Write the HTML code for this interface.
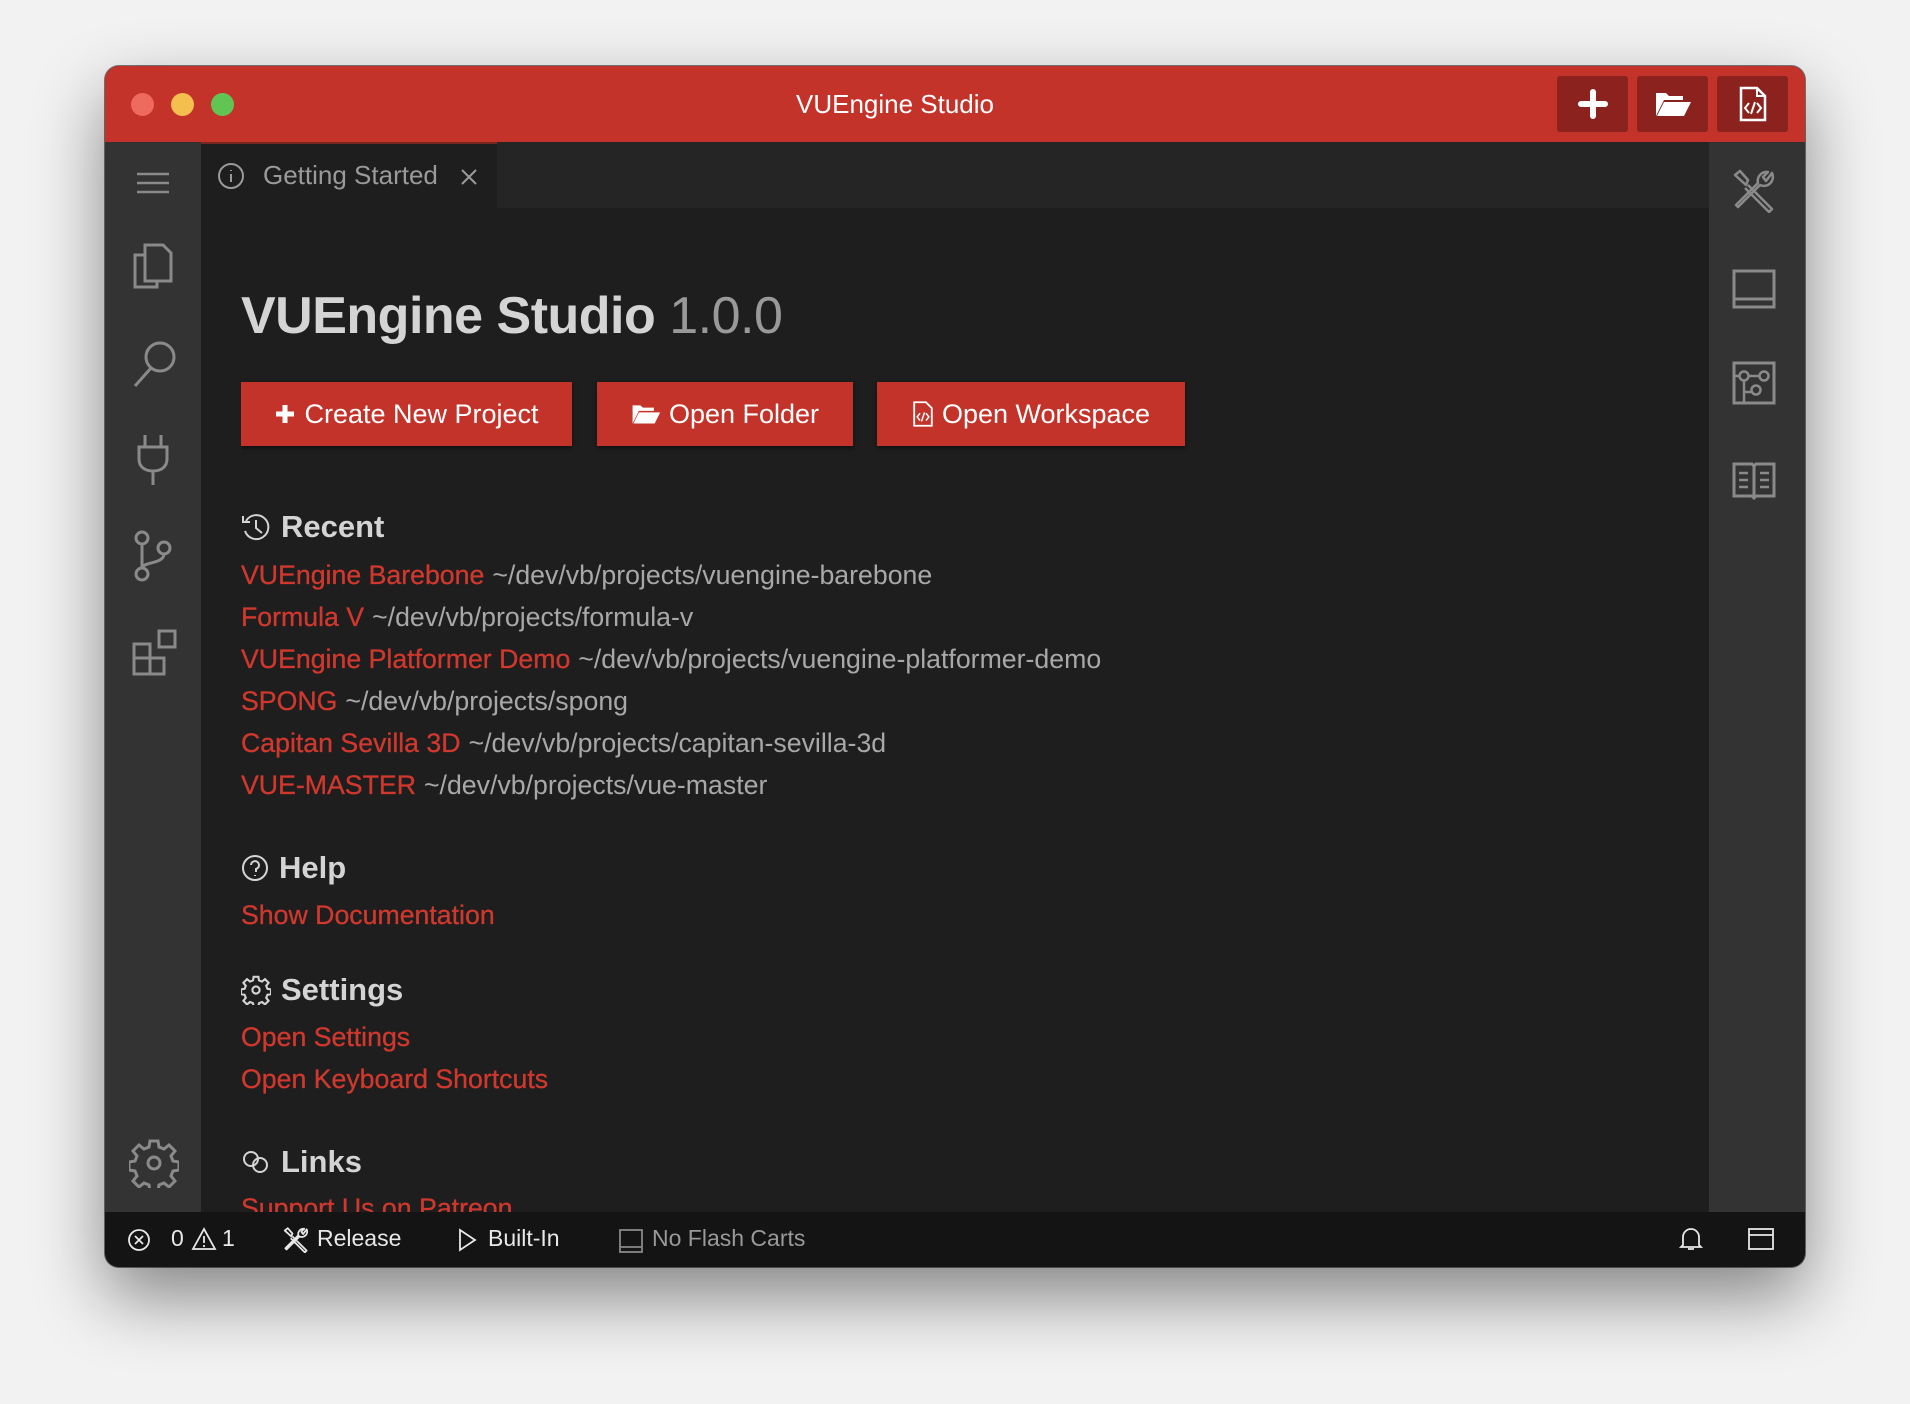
<!DOCTYPE html>
<html><head><meta charset="utf-8"><style>
*{margin:0;padding:0;box-sizing:border-box}
body{width:1910px;height:1404px;background:#f2f2f2;font-family:"Liberation Sans",Arial,sans-serif;position:relative;overflow:hidden}
.win{position:absolute;left:105px;top:66px;width:1700px;height:1201px;border-radius:14px;overflow:hidden;background:#1e1e1e;box-shadow:0 30px 70px rgba(0,0,0,.45),0 0 0 1px rgba(0,0,0,.5)}
.title{position:absolute;left:0;top:0;width:1700px;height:76px;background:#c3332a}
.dot{position:absolute;top:27px;width:23px;height:23px;border-radius:50%}
.ttext{position:absolute;left:640px;top:23px;width:300px;text-align:center;color:#fff;font-size:26px}
.tb{position:absolute;top:10px;width:71px;height:56px;background:#8b221d;border-radius:3px;display:flex;align-items:center;justify-content:center}
.left{position:absolute;left:0;top:76px;width:96px;height:1070px;background:#333}
.right{position:absolute;right:0;top:76px;width:96px;height:1070px;background:#333}
.tabbar{position:absolute;left:96px;top:76px;width:1508px;height:66px;background:#252526}
.tab{position:absolute;left:0;top:0;width:296px;height:66px;background:#1e1e1e;border-top:2px solid #7a2520;color:#9a9a9a;font-size:26px}
.status{position:absolute;left:0;top:1146px;width:1700px;height:55px;background:#141414;color:#e8e8e8;font-size:23px}
.status span{position:absolute;top:13px}
.content{position:absolute;left:136px;top:142px;width:1460px;height:1004px;overflow:hidden}
h1{position:absolute;left:0;top:78px;font-size:52px;color:#d4d4d4;font-weight:bold;white-space:nowrap;letter-spacing:-0.5px}
h1 span{font-weight:normal;color:#999}
.btn{position:absolute;top:174px;height:64px;background:#c3332a;color:#fff;font-size:27px;display:flex;align-items:center;justify-content:center;gap:8px;box-shadow:0 2px 4px rgba(0,0,0,.5)}
h2{position:absolute;left:0;font-size:31px;color:#d4d4d4;font-weight:bold;display:flex;align-items:center;gap:10px}
.row{position:absolute;left:0;font-size:26.7px;white-space:nowrap}
.row a{color:#d0382e;text-decoration:none;-webkit-text-stroke:0.3px #d0382e}
.row i{font-style:normal;color:#a8a8a8;margin-left:8px}
.ic{position:absolute}
</style></head><body>
<div class="win">
 <div class="title">
  <div class="dot" style="left:26px;background:#ee6a5e"></div>
  <div class="dot" style="left:66px;background:#f5bf4f"></div>
  <div class="dot" style="left:106px;background:#61c554"></div>
  <div class="ttext">VUEngine Studio</div>
  <div class="tb" style="left:1452px"><svg width="30" height="30" viewBox="0 0 30 30"><path d="M15 3v24M3 15h24" stroke="#fff" stroke-width="6" stroke-linecap="round"/></svg></div>
  <div class="tb" style="left:1532px"><svg width="38" height="30" viewBox="0 0 38 30"><path d="M2 4h10l3 3h14v4H10L2 27z" fill="#fff"/><path d="M10 13h27l-7 14H3z" fill="#fff"/></svg></div>
  <div class="tb" style="left:1612px"><svg width="30" height="36" viewBox="0 0 30 36"><path d="M3 2h16l8 8v24H3z" fill="none" stroke="#fff" stroke-width="2.5"/><path d="M19 2v8h8" fill="none" stroke="#fff" stroke-width="2"/><path d="M11 17l-4 5 4 5M19 17l4 5-4 5M17 16l-4 12" fill="none" stroke="#fff" stroke-width="2"/></svg></div>
 </div>
 <div class="left">
  <svg class="ic" style="left:30px;top:29px" width="36" height="24" viewBox="0 0 36 24"><path d="M2 3h32M2 12h32M2 21h32" stroke="#8a8a8a" stroke-width="2.5"/></svg>
  <svg class="ic" style="left:26px;top:99px" width="44" height="50" viewBox="0 0 44 50"><path d="M14 14H4v32h22v-6" fill="none" stroke="#8a8a8a" stroke-width="3"/><path d="M14 4h18l8 8v28H14z" fill="none" stroke="#8a8a8a" stroke-width="3"/></svg>
  <svg class="ic" style="left:26px;top:196px" width="48" height="50" viewBox="0 0 48 50"><circle cx="29" cy="19" r="14" fill="none" stroke="#8a8a8a" stroke-width="3"/><path d="M20 30L4 48" stroke="#8a8a8a" stroke-width="3"/></svg>
  <svg class="ic" style="left:30px;top:291px" width="36" height="54" viewBox="0 0 36 54"><path d="M10 2v12M26 2v12M4 14h28v12c0 8-6 12-14 12S4 34 4 26z M18 38v14" fill="none" stroke="#8a8a8a" stroke-width="3"/></svg>
  <svg class="ic" style="left:28px;top:388px" width="40" height="52" viewBox="0 0 40 52"><circle cx="9" cy="8" r="6" fill="none" stroke="#8a8a8a" stroke-width="3"/><circle cx="9" cy="44" r="6" fill="none" stroke="#8a8a8a" stroke-width="3"/><circle cx="31" cy="18" r="6" fill="none" stroke="#8a8a8a" stroke-width="3"/><path d="M9 14v24M31 24c0 10-22 8-22 14" fill="none" stroke="#8a8a8a" stroke-width="3"/></svg>
  <svg class="ic" style="left:26px;top:486px" width="48" height="48" viewBox="0 0 48 48"><path d="M3 16h16v30H3zM3 30h30v16H19" fill="none" stroke="#8a8a8a" stroke-width="3"/><rect x="28" y="3" width="16" height="16" fill="none" stroke="#8a8a8a" stroke-width="3"/></svg>
  <svg class="ic" style="left:24px;top:996px" width="50" height="50" viewBox="0 0 50 50"><path d="M21 3h8l1 6 5 2 5-4 6 6-4 5 2 5 6 1v8l-6 1-2 5 4 5-6 6-5-4-5 2-1 6h-8l-1-6-5-2-5 4-6-6 4-5-2-5-6-1v-8l6-1 2-5-4-5 6-6 5 4 5-2z" fill="none" stroke="#8a8a8a" stroke-width="3"/><circle cx="25" cy="25" r="6" fill="none" stroke="#8a8a8a" stroke-width="3"/></svg>
 </div>
 <div class="right">
  <svg class="ic" style="left:23px;top:27px" width="44" height="44" viewBox="0 0 44 44"><path d="M3 6l5-4 8 9-2 5zM16 16l24 24-3 3L13 19M40 4a9 9 0 0 1-12 12L6 38l-2-2 22-22a9 9 0 0 1 10-11l-5 5 3 4z" fill="none" stroke="#8a8a8a" stroke-width="2.5" stroke-linejoin="round"/></svg>
  <svg class="ic" style="left:23px;top:127px" width="44" height="40" viewBox="0 0 44 40"><rect x="2" y="2" width="40" height="36" fill="none" stroke="#8a8a8a" stroke-width="3"/><path d="M2 30h40" stroke="#8a8a8a" stroke-width="3"/></svg>
  <svg class="ic" style="left:23px;top:219px" width="44" height="44" viewBox="0 0 44 44"><rect x="2" y="2" width="40" height="40" fill="none" stroke="#8a8a8a" stroke-width="3"/><circle cx="12" cy="15" r="4.5" fill="none" stroke="#8a8a8a" stroke-width="2.5"/><circle cx="32" cy="15" r="4.5" fill="none" stroke="#8a8a8a" stroke-width="2.5"/><circle cx="24" cy="29" r="4.5" fill="none" stroke="#8a8a8a" stroke-width="2.5"/><path d="M17 15h10M12 20v9M12 29v13M12 31h7M2 15h5" fill="none" stroke="#8a8a8a" stroke-width="2.5"/></svg>
  <svg class="ic" style="left:23px;top:320px" width="44" height="38" viewBox="0 0 44 38"><path d="M2 2h18l2 2 2-2h18v32H24l-2 2-2-2H2z M22 4v30" fill="none" stroke="#8a8a8a" stroke-width="3"/><path d="M7 11h9M7 18h9M7 25h9M28 11h9M28 18h9M28 25h9" stroke="#8a8a8a" stroke-width="2.5"/></svg>
 </div>
 <div class="tabbar">
  <div class="tab">
   <svg class="ic" style="left:16px;top:18px" width="28" height="28" viewBox="0 0 28 28"><circle cx="14" cy="14" r="12" fill="none" stroke="#9a9a9a" stroke-width="2"/><path d="M14 12v8M14 8v1" stroke="#9a9a9a" stroke-width="2"/></svg>
   <span style="position:absolute;left:62px;top:16px">Getting Started</span>
   <svg class="ic" style="left:259px;top:24px" width="18" height="18" viewBox="0 0 18 18"><path d="M2 2l14 14M16 2L2 16" stroke="#9a9a9a" stroke-width="2"/></svg>
  </div>
 </div>
 <div class="content">
  <h1>VUEngine Studio <span>1.0.0</span></h1>
  <div class="btn" style="left:0;width:331px"><svg width="22" height="22" viewBox="0 0 22 22"><path d="M11 2v18M2 11h18" stroke="#fff" stroke-width="5"/></svg>Create New Project</div>
  <div class="btn" style="left:356px;width:256px"><svg width="30" height="24" viewBox="0 0 38 30"><path d="M2 4h10l3 3h14v4H10L2 27z" fill="#fff"/><path d="M10 13h27l-7 14H3z" fill="#fff"/></svg>Open Folder</div>
  <div class="btn" style="left:636px;width:308px"><svg width="22" height="28" viewBox="0 0 30 36"><path d="M3 2h16l8 8v24H3z" fill="none" stroke="#fff" stroke-width="2.5"/><path d="M11 17l-4 5 4 5M19 17l4 5-4 5M17 16l-4 12" fill="none" stroke="#fff" stroke-width="2"/></svg>Open Workspace</div>
  <h2 style="top:301px"><svg width="30" height="30" viewBox="0 0 30 30"><path d="M5 9A12 12 0 1 1 4 19M2 4v6h7M15 8v8l6 5" fill="none" stroke="#d4d4d4" stroke-width="2"/></svg>Recent</h2>
  <div class="row" style="top:352px"><a>VUEngine Barebone</a><i>~/dev/vb/projects/vuengine-barebone</i></div>
  <div class="row" style="top:394px"><a>Formula V</a><i>~/dev/vb/projects/formula-v</i></div>
  <div class="row" style="top:436px"><a>VUEngine Platformer Demo</a><i>~/dev/vb/projects/vuengine-platformer-demo</i></div>
  <div class="row" style="top:478px"><a>SPONG</a><i>~/dev/vb/projects/spong</i></div>
  <div class="row" style="top:520px"><a>Capitan Sevilla 3D</a><i>~/dev/vb/projects/capitan-sevilla-3d</i></div>
  <div class="row" style="top:562px"><a>VUE-MASTER</a><i>~/dev/vb/projects/vue-master</i></div>
  <h2 style="top:642px"><svg width="28" height="28" viewBox="0 0 28 28"><circle cx="14" cy="14" r="12" fill="none" stroke="#d4d4d4" stroke-width="2"/><path d="M10 11a4 4 0 1 1 5 4v3M14 21v1" fill="none" stroke="#d4d4d4" stroke-width="2"/></svg>Help</h2>
  <div class="row" style="top:692px"><a>Show Documentation</a></div>
  <h2 style="top:764px"><svg width="30" height="30" viewBox="0 0 50 50"><path d="M21 3h8l1 6 5 2 5-4 6 6-4 5 2 5 6 1v8l-6 1-2 5 4 5-6 6-5-4-5 2-1 6h-8l-1-6-5-2-5 4-6-6 4-5-2-5-6-1v-8l6-1 2-5-4-5 6-6 5 4 5-2z" fill="none" stroke="#d4d4d4" stroke-width="3.5"/><circle cx="25" cy="25" r="6" fill="none" stroke="#d4d4d4" stroke-width="3.5"/></svg>Settings</h2>
  <div class="row" style="top:814px"><a>Open Settings</a></div>
  <div class="row" style="top:856px"><a>Open Keyboard Shortcuts</a></div>
  <h2 style="top:936px"><svg width="30" height="24" viewBox="0 0 30 24"><circle cx="10" cy="9" r="7" fill="none" stroke="#d4d4d4" stroke-width="2"/><circle cx="19" cy="15" r="7" fill="none" stroke="#d4d4d4" stroke-width="2"/></svg>Links</h2>
  <div class="row" style="top:985px"><a>Support Us on Patreon</a></div>
 </div>
 <div class="status">
  <svg class="ic" style="left:22px;top:16px" width="24" height="24" viewBox="0 0 24 24"><circle cx="12" cy="12" r="10" fill="none" stroke="#e8e8e8" stroke-width="1.8"/><path d="M8 8l8 8M16 8l-8 8" stroke="#e8e8e8" stroke-width="1.8"/></svg>
  <span style="left:66px">0</span>
  <svg class="ic" style="left:86px;top:15px" width="26" height="24" viewBox="0 0 26 24"><path d="M13 2L2 22h22z" fill="none" stroke="#e8e8e8" stroke-width="1.8"/><path d="M13 9v7M13 18v2" stroke="#e8e8e8" stroke-width="1.8"/></svg>
  <span style="left:117px">1</span>
  <svg class="ic" style="left:178px;top:15px" width="26" height="26" viewBox="0 0 44 44"><path d="M3 6l5-4 8 9-2 5zM16 16l24 24-3 3L13 19M40 4a9 9 0 0 1-12 12L6 38l-2-2 22-22a9 9 0 0 1 10-11l-5 5 3 4z" fill="none" stroke="#e8e8e8" stroke-width="3" stroke-linejoin="round"/></svg>
  <span style="left:212px">Release</span>
  <svg class="ic" style="left:352px;top:16px" width="20" height="24" viewBox="0 0 20 24"><path d="M3 2l15 10L3 22z" fill="none" stroke="#e8e8e8" stroke-width="1.8"/></svg>
  <span style="left:383px">Built-In</span>
  <svg class="ic" style="left:514px;top:17px" width="24" height="24" viewBox="0 0 24 24"><rect x="1" y="1" width="22" height="22" fill="none" stroke="#888" stroke-width="1.8"/><path d="M1 18h22" stroke="#888" stroke-width="1.8"/></svg>
  <span style="left:547px;color:#999">No Flash Carts</span>
  <svg class="ic" style="left:1574px;top:14px" width="24" height="26" viewBox="0 0 24 26"><path d="M4 19V11a8 8 0 0 1 16 0v8l2 2H2z M9 23h6" fill="none" stroke="#e8e8e8" stroke-width="1.8"/></svg>
  <svg class="ic" style="left:1643px;top:16px" width="26" height="22" viewBox="0 0 26 22"><rect x="1" y="1" width="24" height="20" fill="none" stroke="#e8e8e8" stroke-width="1.8"/><path d="M1 7h24" stroke="#e8e8e8" stroke-width="1.8"/></svg>
 </div>
</div>
</body></html>
